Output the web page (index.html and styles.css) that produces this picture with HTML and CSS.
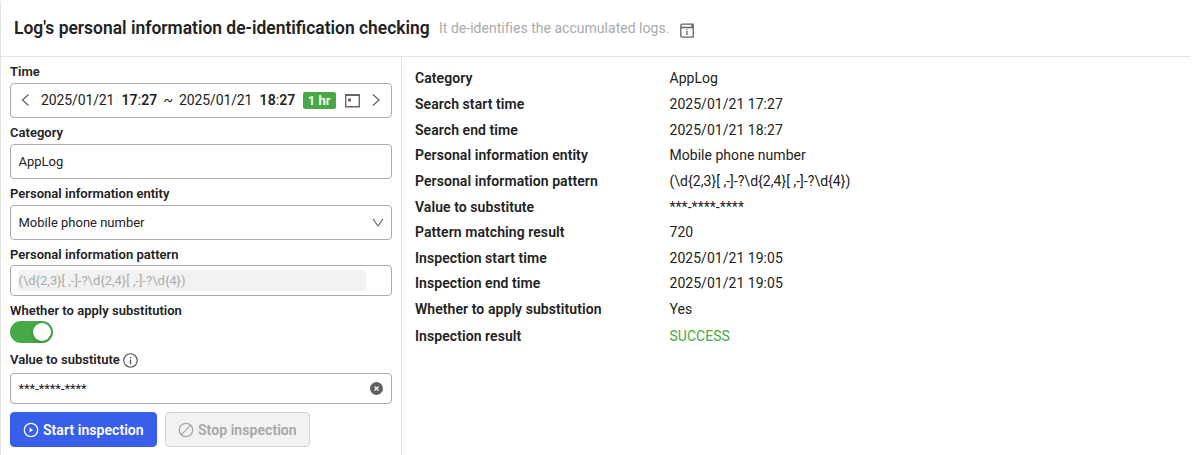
FILE: index.html
```html
<!DOCTYPE html>
<html lang="en">
<head>
<meta charset="utf-8">
<title>Log's personal information de-identification checking</title>
<link rel="stylesheet" href="styles.css">
</head>
<body>
<main class="panel">
  <header class="header">
    <h1 class="title">Log's personal information de-identification checking</h1>
    <span class="subtitle">It de-identifies the accumulated logs.</span>
    <svg class="doc-icon" width="14" height="16" viewBox="0 0 14 16" fill="none" stroke="#666" stroke-width="1.3"><path d="M2.2 1.2H13.2V14.2H2.2Q.8 14.2 .8 12.8V2.6Q.8 1.2 2.2 1.2ZM1 4.5H13.2M12 1V4"/><path d="M7 8V11.8M7 6V7.1" stroke-width="1.2"/><path d="M6 8.3H7M6 11.5H8.2" stroke-width=".6"/></svg>
  </header>
  <div class="content">
    <form class="form">
      <label class="label">Time</label>
      <div class="box time-box">
        <svg class="prev" width="9" height="14" viewBox="0 0 9 14" fill="none" stroke="#666" stroke-width="1.3"><path d="M7.5 1.5L1.5 7L7.5 12.5"/></svg>
        <span class="date">2025/01/21</span><span class="clock start"><b>17</b>:<b>27</b></span><span class="tilde">~</span><span class="date">2025/01/21</span><span class="clock end"><b>18</b>:<b>27</b></span>
        <span class="badge">1 hr</span>
        <svg class="calendar" width="15" height="15" viewBox="0 0 15 15"><path d="M.7 1.8H14.3V13.8H.7Z" fill="none" stroke="#666" stroke-width="1.4"/><path d="M0 1H15V3H0ZM3 5.5H6V8.5H3Z" fill="#666"/></svg>
        <svg class="next" width="9" height="14" viewBox="0 0 9 14" fill="none" stroke="#666" stroke-width="1.3"><path d="M1 1.5L7 7L1 12.5"/></svg>
      </div>
      <label class="label">Category</label>
      <div class="box">AppLog</div>
      <label class="label">Personal information entity</label>
      <div class="box select"><span>Mobile phone number</span>
        <svg width="12" height="10" viewBox="0 0 12 10" fill="none" stroke="#666" stroke-width="1.2"><path d="M1 1L6 8L11 1"/></svg>
      </div>
      <label class="label pattern-label">Personal information pattern</label>
      <div class="box short"><span class="disabled-value">(\d{2,3}[ ,-]-?\d{2,4}[ ,-]-?\d{4})</span></div>
      <label class="label switch-label">Whether to apply substitution</label>
      <div class="switch"><span class="knob"></span></div>
      <label class="label value-label">Value to substitute
        <svg width="15" height="15" viewBox="0 0 14 14"><circle cx="7" cy="7" r="6.3" fill="none" stroke="#555" stroke-width="1.1"/><path d="M6.4 3.7H7.6V5H6.4ZM6.4 6H7.6V10.5H6.4Z" fill="#555"/></svg>
      </label>
      <div class="box value-box"><span class="mask">***-****-****</span>
        <svg width="13" height="13" viewBox="0 0 13 13"><circle cx="6.5" cy="6.5" r="6.5" fill="#606060"/><path d="M4.5 4.5L8.5 8.5M8.5 4.5L4.5 8.5" stroke="#fff" stroke-width="1.2"/></svg>
      </div>
      <div class="actions">
        <button type="button" class="button primary"><svg width="16" height="16" viewBox="0 0 16 16"><circle cx="8" cy="8" r="6.7" fill="none" stroke="#fff" stroke-width="1.3"/><path d="M6.5 5.6L10 8L6.5 10.4Z" fill="#fff"/></svg><span>Start inspection</span></button>
        <button type="button" class="button stopped" disabled><svg width="16" height="16" viewBox="0 0 16 16" fill="none" stroke="#a6a6a6" stroke-width="1.3"><circle cx="8" cy="8" r="6.7"/><path d="M3.4 12.6L12.6 3.4"/></svg><span>Stop inspection</span></button>
      </div>
    </form>
    <dl class="results">
      <dt>Category</dt><dd>AppLog</dd>
      <dt>Search start time</dt><dd>2025/01/21 17:27</dd>
      <dt>Search end time</dt><dd>2025/01/21 18:27</dd>
      <dt>Personal information entity</dt><dd>Mobile phone number</dd>
      <dt>Personal information pattern</dt><dd>(\d{2,3}[ ,-]-?\d{2,4}[ ,-]-?\d{4})</dd>
      <dt>Value to substitute</dt><dd>***-****-****</dd>
      <dt>Pattern matching result</dt><dd>720</dd>
      <dt>Inspection start time</dt><dd>2025/01/21 19:05</dd>
      <dt>Inspection end time</dt><dd>2025/01/21 19:05</dd>
      <dt>Whether to apply substitution</dt><dd>Yes</dd>
      <dt>Inspection result</dt><dd class="success">SUCCESS</dd>
    </dl>
  </div>
</main>
</body>
</html>
```
FILE: styles.css
```css
* { box-sizing: border-box; }
body { margin: 0; background: #fff; color: #222; font-family: Roboto, "Liberation Sans", sans-serif; overflow: hidden; }
svg { display: block; flex: none; }
.panel { width: 1190px; height: 455px; border-left: 1px solid #e2e2e2; border-top-left-radius: 4px; }
.header { height: 57px; display: flex; align-items: center; padding: 0 0 1px 13px; border-bottom: 1px solid #e4e4e4; white-space: nowrap; }
.title { margin: 0; width: 416px; font-size: 17.45px; font-weight: 600; line-height: 24px; }
.subtitle { margin-left: 9px; width: 230px; color: #aaa; font-size: 14px; letter-spacing: .02px; }
.doc-icon { margin: 6px 0 0 11px; }
.content { display: flex; height: 398px; }
.form { width: 401px; height: 398px; padding: 7px 9px 0; border-right: 1px solid #e2e2e2; display: flex; flex-direction: column; }
.label { height: 16px; line-height: 16px; margin-bottom: 3px; font-size: 13px; font-weight: 600; letter-spacing: .02px; white-space: nowrap; }
.box { width: 382px; height: 35px; flex: none; display: flex; align-items: center; margin-bottom: 7px; padding: 0 7.5px; border: 1px solid #aaa; border-radius: 4px; font-size: 13px; white-space: nowrap; }
.time-box { padding: 0 10px 1px; font-size: 14px; }
.date { width: 74px; letter-spacing: -.12px; }
.prev { margin-right: 11px; }
.clock { width: 36px; margin-left: 6.5px; letter-spacing: .1px; }
.clock b { font-weight: 600; }
.tilde { margin: 0 6px; }
.badge { width: 33px; height: 17px; margin-left: 7px; border-radius: 2px; background: #47a847; color: #fff; font-size: 13px; font-weight: 600; line-height: 17px; text-align: center; }
.calendar { margin-left: 9px; }
.next { margin-left: 12px; }
.select { justify-content: space-between; }
.pattern-label { margin-bottom: 2px; }
.short { height: 31px; padding: 0 7px; }
.disabled-value { width: 348px; height: 21px; border-radius: 4px; background: #f2f2f2; color: #aaa; line-height: 21px; padding-left: .5px; }
.switch-label { margin-bottom: 2px; }
.switch { width: 43px; height: 22px; flex: none; padding: 2px; border-radius: 11px; background: #47a847; display: flex; justify-content: flex-end; margin-bottom: 9px; }
.knob { width: 18px; height: 18px; border-radius: 50%; background: #fff; box-shadow: 0 2px 4px #00230b33; }
.value-label { display: flex; align-items: center; gap: 3.5px; line-height: 18px; margin-bottom: 5px; }
.value-box { height: 31px; justify-content: space-between; margin-bottom: 8px; padding-right: 8px; }
.mask { letter-spacing: -.05px; margin-top: -1px; }
.actions { display: flex; gap: 8.5px; }
.button { height: 35px; padding: 0 11.5px; display: flex; align-items: center; gap: 4.5px; border: 1px solid #375fe9; border-radius: 4px; font: 600 14px Roboto, "Liberation Sans", sans-serif; letter-spacing: .06px; white-space: nowrap; }
.primary { width: 146.5px; background: #375fe9; color: #fff; }
.stopped { width: 144.5px; border-color: #d4d4d4; background: #f2f2f2; color: #a6a6a6; }
.results { margin: 8.5px 0 0 13px; display: grid; grid-template-columns: 254.5px 1fr; grid-template-rows: repeat(10, 25.65px) 28.5px; align-items: center; align-content: start; font-size: 14px; letter-spacing: .03px; white-space: nowrap; }
.results dt { font-weight: 600; letter-spacing: .07px; }
.results dd { margin: 0; }
.results .success { color: #47a847; letter-spacing: .03px; }
```
